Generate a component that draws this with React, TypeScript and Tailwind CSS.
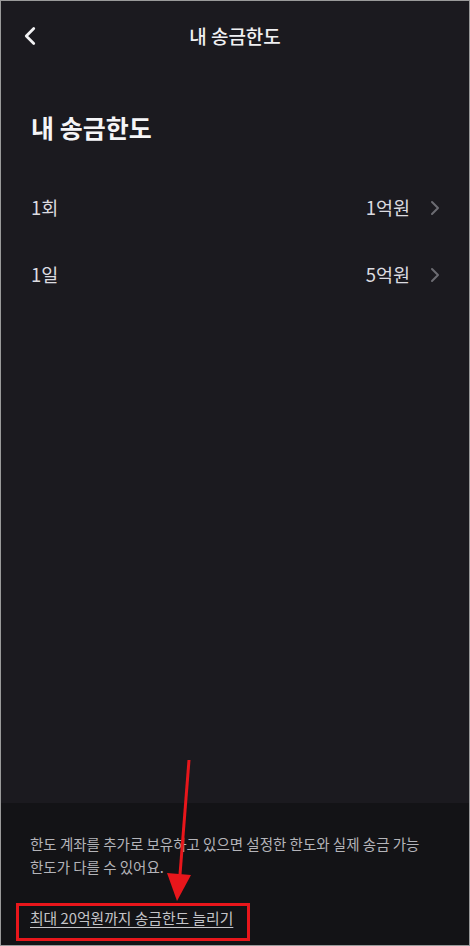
import { ChevronLeft, ChevronRight } from "lucide-react";

const rows = [
  { label: "1회", value: "1억원" },
  { label: "1일", value: "5억원" },
];

export default function App() {
  return (
    <div
      className="relative w-[470px] h-[946px] bg-[#1b1a1f] border border-[#9a9a9a] flex flex-col overflow-hidden"
      style={{ fontFamily: '"Noto Sans CJK KR", "Noto Sans", sans-serif' }}
    >
      <header className="h-[70px] flex items-center relative shrink-0">
        <button className="absolute left-[14px] top-[20px] text-[#f2f2f4]">
          <ChevronLeft className="w-[30px] h-[30px]" strokeWidth={2.2} />
        </button>
        <h1 className="w-full text-center text-[19px] text-[#f0f0f2] font-medium">내 송금한도</h1>
      </header>

      <div className="px-[30px] pt-[40px]">
        <h2 className="text-[25px] font-bold text-[#f5f5f7] leading-[32px]">내 송금한도</h2>
      </div>

      <ul className="mt-[48px] pl-[30px] pr-[22px] flex flex-col gap-[33px]">
        {rows.map((row) => (
          <li key={row.label} className="flex items-center justify-between h-[34px]">
            <span className="text-[18.5px] text-[#dcdce0]">{row.label}</span>
            <span className="flex items-center gap-[13px]">
              <span className="text-[18.5px] text-[#dcdce0]">{row.value}</span>
              <ChevronRight className="w-[24px] h-[24px] text-[#6c6c72]" strokeWidth={2} />
            </span>
          </li>
        ))}
      </ul>

      <div className="flex-1" />

      <footer className="h-[142px] bg-[#131316] px-[29px] pt-[29px] shrink-0">
        <p className="text-[14.5px] leading-[23px] text-[#b4b4b9]">
          한도 계좌를 추가로 보유하고 있으면 설정한 한도와 실제 송금 가능
          <br />
          한도가 다를 수 있어요.
        </p>
        <a className="block mt-[30px] text-[14.8px] leading-[20px] text-[#c4c4c8] underline underline-offset-[3px]">
          최대 20억원까지 송금한도 늘리기
        </a>
      </footer>

      {/* annotation overlay */}
      <div className="absolute left-[15px] top-[902px] w-[234px] h-[38px] border-[3px] border-[#e8161b]" />
      <svg className="absolute left-0 top-0 pointer-events-none" width="470" height="946">
        <line x1="188" y1="759" x2="178.5" y2="880" stroke="#e8161b" strokeWidth="3" />
        <polygon points="166,872 190,874 176,900" fill="#e8161b" />
      </svg>
    </div>
  );
}
